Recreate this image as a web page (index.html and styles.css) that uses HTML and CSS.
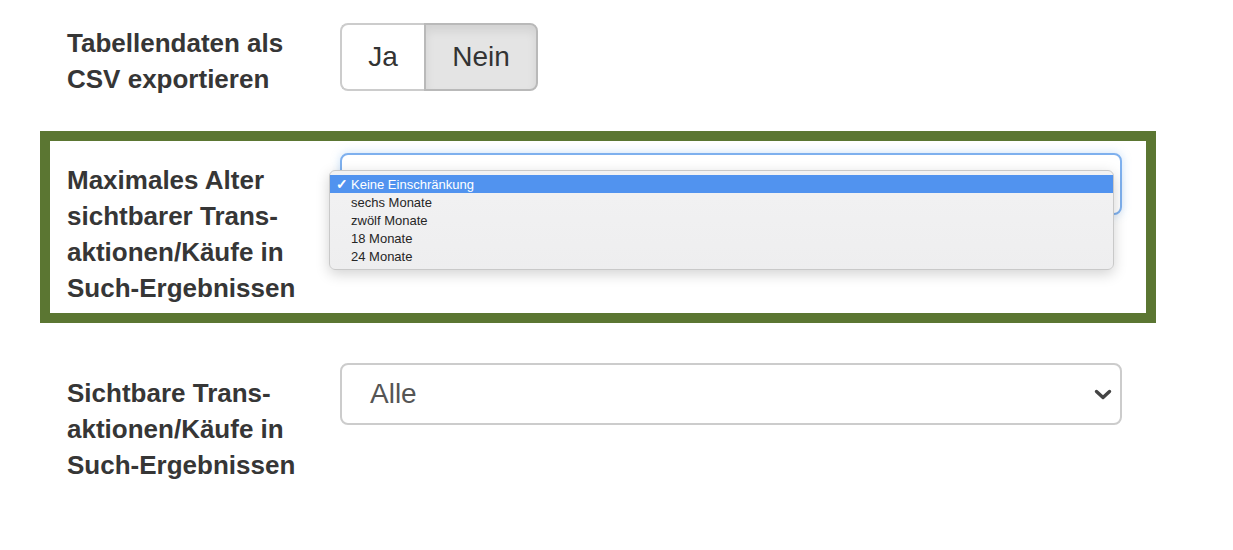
FILE: index.html
```html
<!DOCTYPE html>
<html lang="de">
<head>
<meta charset="utf-8">
<title>Einstellungen</title>
<link rel="stylesheet" href="styles.css">
</head>
<body>
<div class="form">
  <div class="row row-toggle">
    <div class="label label-toggle">Tabellendaten als<br>CSV exportieren</div>
    <div class="control">
      <div class="btn-group">
        <span class="btn btn-ja">Ja</span>
        <span class="btn btn-nein active">Nein</span>
      </div>
    </div>
  </div>

  <div class="row row-highlight">
    <div class="label label-hl">Maximales Alter<br>sichtbarer Trans-<br>aktionen/Käufe in<br>Such-Ergebnissen</div>
    <div class="control">
      <div class="select-wrap">
        <div class="select focused"></div>
        <ul class="popup">
          <li class="option selected"><span class="check">✓</span>Keine Einschränkung</li>
          <li class="option"><span class="check"></span>sechs Monate</li>
          <li class="option"><span class="check"></span>zwölf Monate</li>
          <li class="option"><span class="check"></span>18 Monate</li>
          <li class="option"><span class="check"></span>24 Monate</li>
        </ul>
      </div>
    </div>
  </div>

  <div class="row">
    <div class="label label-last">Sichtbare Trans-<br>aktionen/Käufe in<br>Such-Ergebnissen</div>
    <div class="control">
      <div class="select">
        <span class="select-text">Alle</span>
        <svg class="chevron" width="18" height="11" viewBox="0 0 18 11"><path d="M2.5 2.5 L9 8.5 L15.5 2.5" fill="none" stroke="#444" stroke-width="3.4" stroke-linecap="round" stroke-linejoin="round"/></svg>
      </div>
    </div>
  </div>
</div>
</body>
</html>
```

FILE: styles.css
```css
* { box-sizing: border-box; }

html, body {
  margin: 0;
  padding: 0;
  background: #ffffff;
}

body {
  font-family: "Liberation Sans", Arial, sans-serif;
  color: #333333;
}

.form {
  display: flex;
  flex-direction: column;
  padding-top: 23px;
}

.row {
  display: grid;
  grid-template-columns: 273px 782px;
  align-items: start;
  padding-left: 67px;
}

.row-toggle {
  margin-bottom: 34px;
}

.row-highlight {
  margin-left: 40px;
  width: 1116px;
  border: 10px solid #5b7632;
  padding: 12px 0 7px 17px;
  margin-bottom: 40px;
}

.label {
  font-weight: bold;
  font-size: 26px;
  line-height: 36px;
  color: #363636;
  padding-top: 11px;
}

.label-toggle {
  padding-top: 2px;
}

.label-hl {
  padding-top: 9px;
}

.label-last {
  padding-top: 12px;
}

/* toggle buttons */
.btn-group {
  display: flex;
}

.btn {
  display: block;
  font-size: 28px;
  line-height: 40px;
  padding: 12px 0;
  text-align: center;
  color: #333333;
  border: 2px solid #cccccc;
  background: #ffffff;
}

.btn-ja {
  width: 84px;
  border-radius: 8px 0 0 8px;
  border-right: none;
}

.btn-nein {
  width: 114px;
  border-radius: 0 8px 8px 0;
}

.btn.active {
  background: #e4e4e4;
  border-color: #b9b9b9;
  box-shadow: inset 0 6px 10px rgba(0, 0, 0, 0.08);
}

/* selects */
.select-wrap {
  position: relative;
}

.select {
  display: flex;
  align-items: center;
  width: 782px;
  height: 62px;
  padding: 0 8px 0 28px;
  border: 2px solid #cccccc;
  border-radius: 8px;
  background: #ffffff;
  font-size: 28px;
  color: #555555;
}

.select.focused {
  border-color: #7eb0ee;
  box-shadow: 0 0 10px rgba(102, 165, 233, 0.35);
}

.select-text {
  flex: 1;
}

.chevron {
  display: block;
}

/* native dropdown popup */
.popup {
  position: absolute;
  left: -11px;
  top: 17px;
  width: 785px;
  margin: 0;
  padding: 4px 0;
  list-style: none;
  background: linear-gradient(#f2f2f3, #eeeeef);
  border: 1px solid #c9c9c9;
  border-radius: 6px;
  box-shadow: 0 4px 14px rgba(0, 0, 0, 0.18);
  font-family: "Liberation Sans", Arial, sans-serif;
  font-size: 13px;
  color: #262626;
}

.option {
  display: flex;
  align-items: center;
  height: 18px;
  padding-left: 6px;
}

.option.selected {
  background: #5193ef;
  color: #ffffff;
}

.check {
  display: inline-block;
  width: 15px;
  font-size: 14px;
  font-weight: bold;
}
```
